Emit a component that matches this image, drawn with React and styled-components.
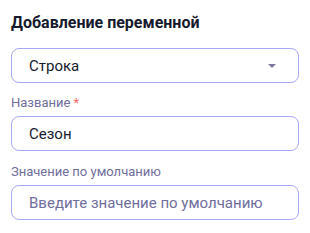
import React from 'react'
import styled, { createGlobalStyle } from 'styled-components'

const GlobalStyle = createGlobalStyle`
    body {
        margin: 0;
        background: #ffffff;
        font-family: Roboto, "Noto Sans", sans-serif;
    }
`

function App() {
    return (
        <Container>
            <GlobalStyle />
            <Title>Добавление переменной</Title>
            <SelectBox>
                <span>Строка</span>
                <Caret />
            </SelectBox>
            <Field>
                <Label>
                    Название <Required>*</Required>
                </Label>
                <Input defaultValue="Сезон" />
            </Field>
            <Field>
                <Label>Значение по умолчанию</Label>
                <Input placeholder="Введите значение по умолчанию" />
            </Field>
        </Container>
    )
}

export default App

const Container = styled.div`
    width: 288px;
    padding: 13px 11px 0 11px;
    display: flex;
    flex-direction: column;
`
const Title = styled.div`
    font-weight: 700;
    font-size: 16px;
    line-height: 20px;
    color: #161a2e;
    margin-bottom: 15px;
`
const SelectBox = styled.div`
    box-sizing: border-box;
    height: 35px;
    border: 1px solid #a9a9f5;
    border-radius: 8px;
    display: flex;
    align-items: center;
    justify-content: space-between;
    padding: 0 22px 0 17px;
    font-size: 15px;
    color: #161a2e;
    margin-bottom: 12px;
`
const Caret = styled.div`
    width: 0;
    height: 0;
    border-left: 4px solid transparent;
    border-right: 4px solid transparent;
    border-top: 4px solid #7a7a9c;
`
const Field = styled.div`
    display: flex;
    flex-direction: column;
    margin-bottom: 13px;
`
const Label = styled.div`
    font-size: 13px;
    line-height: 16px;
    color: #6f6e9c;
    margin-bottom: 5px;
`
const Required = styled.span`
    color: #f46a6a;
`
const Input = styled.input`
    box-sizing: border-box;
    height: 35px;
    border: 1px solid #a9a9f5;
    border-radius: 8px;
    padding: 0 17px;
    font-family: Roboto, "Noto Sans", sans-serif;
    font-size: 15px;
    color: #161a2e;
    outline: none;
    &::placeholder {
        color: #6f6e9c;
        opacity: 1;
    }
`
